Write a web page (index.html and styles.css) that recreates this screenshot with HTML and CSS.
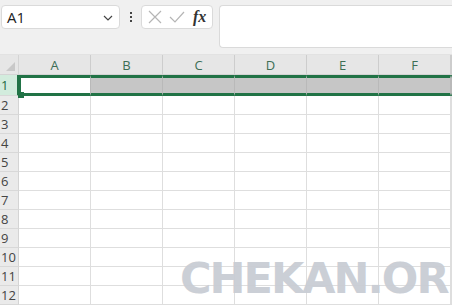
FILE: index.html
```html
<!doctype html>
<html>
<head>
<meta charset="UTF-8">
<title>Sheet</title>
<link rel="stylesheet" href="styles.css">
</head>
<body>
<div class="bar">
  <div class="namebox">
    <span>A1</span>
    <svg class="chev" width="10" height="6" viewBox="0 0 10 6"><path d="M1 1l4 4 4-4" fill="none" stroke="#444" stroke-width="1.2"/></svg>
  </div>
  <div class="dots"><i></i><i></i><i></i></div>
  <div class="fbtns">
    <svg width="14" height="14" viewBox="0 0 14 14"><path d="M1 1l12 12M13 1L1 13" stroke="#b5b5b5" stroke-width="1.2"/></svg>
    <svg width="16" height="14" viewBox="0 0 16 14"><path d="M1 7l5 5L15 2" fill="none" stroke="#b5b5b5" stroke-width="1.2"/></svg>
    <span class="fx">fx</span>
  </div>
  <div class="formula"></div>
</div>

<div class="sheet">
  <div class="corner"><span></span></div>
  <div class="ch">A</div><div class="ch">B</div><div class="ch">C</div><div class="ch">D</div><div class="ch">E</div><div class="ch">F</div><div class="ch"></div>

  <div class="rh sel">1</div>
  <div class="c r1 first"></div><div class="c r1 hi"></div><div class="c r1 hi"></div><div class="c r1 hi"></div><div class="c r1 hi"></div><div class="c r1 hi"></div><div class="c r1 hi"></div>
</div>
<div class="sheet rows" id="rows"></div>

<div class="mark">CHEKAN.OR</div>

<script>
var rows = document.getElementById('rows');
var html = '';
for (var r = 2; r <= 12; r++) {
  html += '<div class="rh">' + r + '</div>';
  for (var c = 0; c < 7; c++) html += '<div class="c"></div>';
}
rows.innerHTML = html;
</script>
</body>
</html>
```

FILE: styles.css
```css
body{margin:0;font-family:"Segoe UI","Open Sans","Liberation Sans",sans-serif;background:#fff;overflow:hidden;width:452px;height:305px;position:relative;}

.bar{background:#f0f0f0;height:55px;display:flex;align-items:flex-start;padding-top:5px;box-sizing:border-box;border-bottom:1px solid #e2e2e2;}
.namebox{width:119px;height:24px;margin-left:1px;background:#fff;border:1px solid #dadada;border-radius:4px;box-sizing:border-box;display:flex;align-items:center;justify-content:space-between;padding:0 6px 0 5px;font-size:15px;color:#222;}
.chev{margin-top:1px;}
.dots{width:21px;height:24px;display:flex;flex-direction:column;align-items:center;justify-content:center;gap:2px;}
.dots i{width:2px;height:2px;background:#444;display:block;}
.fbtns{width:72px;height:24px;background:#fff;border:1px solid #dadada;border-radius:4px;box-sizing:border-box;display:flex;align-items:center;gap:7px;padding-left:6px;}
.fx{font-family:"Liberation Serif",serif;font-style:italic;font-weight:bold;font-size:16px;color:#333;margin-left:1px;}
.formula{flex:1;height:43px;margin-left:6px;background:#fff;border:1px solid #dadada;border-right:0;border-radius:4px 0 0 4px;box-sizing:border-box;}

.sheet{display:grid;grid-template-columns:19px repeat(6,72px) 1fr;}
.corner{height:20px;background:#e6e6e6;border-right:1px solid #d4d4d4;border-bottom:1px solid #d4d4d4;box-sizing:border-box;position:relative;}
.corner span{position:absolute;right:3px;bottom:3px;width:0;height:0;border-left:9px solid transparent;border-bottom:9px solid #c8c8c8;}
.ch{height:20px;background:#e6e6e6;border-right:1px solid #cdcdcd;border-bottom:1px solid #d4d4d4;box-sizing:border-box;text-align:center;font-size:13px;line-height:20px;color:#3c6e55;}

.rh{height:19px;background:#eaeaea;border-right:1px solid #d4d4d4;border-bottom:1px solid #d8d8d8;box-sizing:border-box;font-size:13px;line-height:19px;color:#444;padding-left:1px;}
.rh.sel{height:21px;background:#d2ecdd;color:#1e6b44;line-height:21px;border-right:2px solid #217346;}
.c{height:19px;border-right:1px solid #dedede;border-bottom:1px solid #dedede;box-sizing:border-box;}
.r1{height:21px;border-top:3px solid #217346;border-bottom:3px solid #217346;border-right-color:#b9b9b9;}
.r1.first{border-left:2px solid #217346;position:relative;}
.r1.first::after{content:"";position:absolute;left:-3px;bottom:-5px;width:6px;height:6px;background:#217346;}
.hi{background:#c6c6c6;}

.mark{position:absolute;left:180px;top:253px;font-family:"DejaVu Sans",sans-serif;font-weight:bold;font-size:43px;letter-spacing:-2px;color:#c9cdd4;opacity:.95;white-space:nowrap;}
```
